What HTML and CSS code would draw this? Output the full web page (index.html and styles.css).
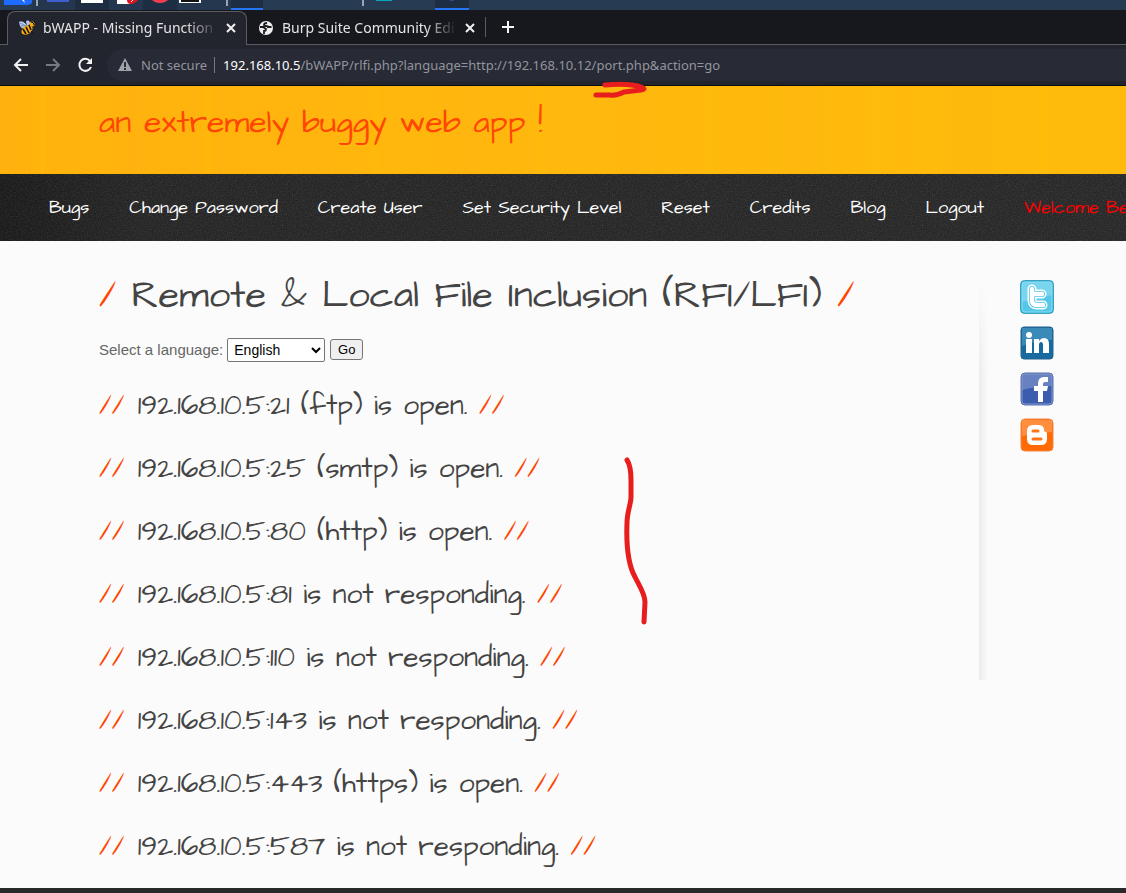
FILE: index.html
```html
<!DOCTYPE html>
<html lang="en">
<head>
<meta charset="utf-8">
<title>bWAPP - Missing Functional Level Access Control</title>
<link rel="stylesheet" href="styles.css">
</head>
<body>
<div class="taskbar">
  <svg width="480" height="10" viewBox="0 0 480 10">
    <rect x="33" width="198" height="10" fill="#24374f"/>
    <path d="M75 0h34v10H75zM143 0h34v10h-34z" fill="#1d2d42"/>
    <path d="M4 0h28v3q-2 2-5 2H4z" fill="#1d6bff"/>
    <path d="M22 0l3 3-1-3z" fill="#fff"/>
    <path d="M36 0h2v6h-2zM226 0h2v6h-2zM362 0h2v6h-2z" fill="#9aa5b2"/>
    <path d="M47 0h22v2H47z" fill="#3f5fd0"/>
    <path d="M81 0h22v3H81zM117 0h15l-1 4h-14z" fill="#fff"/>
    <path d="M127 0q0 4 4 4t7-4z" fill="#d9141e"/><path d="M131 2l2-2" stroke="#fff"/>
    <path d="M152 0q3 3 8 3t8-3z" fill="#f03c50"/>
    <path d="M179 0h22v3h-22z" fill="#fff"/><path d="M181 0h18v2h-18z" fill="#101214"/>
    <path d="M231 0h32v8h-32zM435 0h34v8h-34z" fill="#1d2d42"/>
    <path d="M231 8h32v2h-32zM435 8h34v2h-34z" fill="#2675f5"/>
    <path d="M376 0h16v1h-16z" fill="#08a9bd"/><path d="M449 0h5l-2 1z" fill="#3b5ca8"/>
  </svg>
</div>

<div class="tabs">
  <div class="tab tab-active">
    <svg class="favicon" width="16" height="16" viewBox="0 0 16 16">
      <path d="M0 2Q3 0 7 4L8 7Q3 10 1 6zM7 1q4-2 4 3L8 6z" fill="#b7cdf3"/>
      <path d="M1 3l6 3M2 6h5" stroke="#7188b2" stroke-width="1"/>
      <ellipse cx="8" cy="10" rx="6" ry="4" transform="rotate(-32 8 10)" fill="#f6ac11"/>
      <path d="M4 9l3 5M7 7l3 6M10 5l2 5" stroke="#15130c" stroke-width="1.6"/>
      <circle cx="13" cy="4" r="2.5" fill="#f6ac11"/><path d="M12 2q3 0 3 3M12 11l2 3" stroke="#15130c" fill="none"/>
    </svg>
    <span class="tab-name">bWAPP - Missing Function</span>
    <button class="icon-button" aria-label="Close tab"><svg width="10" height="10" viewBox="0 0 10 10"><path d="M1 1l8 8M9 1L1 9" stroke="#f0f0f2" stroke-width="2"/></svg></button>
  </div>
  <div class="tab tab-second">
    <svg class="favicon" width="16" height="16" viewBox="0 0 16 16">
      <circle cx="8" cy="8" r="7" fill="#eeeeef"/>
      <path d="M9 3Q6 3 6 5q0 1 2 1t2 1h3.500M2 7h3l3 2q0 2-2 2v3" fill="none" stroke="#1a1b20" stroke-width="1.8"/>
    </svg>
    <span class="tab-name">Burp Suite Community Edi</span>
    <button class="icon-button" aria-label="Close tab"><svg width="10" height="10" viewBox="0 0 10 10"><path d="M1 1l8 8M9 1L1 9" stroke="#f0f0f2" stroke-width="2"/></svg></button>
  </div>
  <button class="icon-button new-tab" aria-label="New tab"><svg width="12" height="12" viewBox="0 0 12 12"><path d="M6 0v12M0 6h12" stroke="#f4f4f6" stroke-width="2"/></svg></button>
</div>

<div class="toolbar">
  <button class="icon-button" aria-label="Back"><svg width="16" height="16" viewBox="0 0 16 16"><path d="M15 8H2M8 2L2 8l6 6" fill="none" stroke="#f2f2f4" stroke-width="2"/></svg></button>
  <button class="icon-button" aria-label="Forward"><svg width="16" height="16" viewBox="0 0 16 16"><path d="M1 8h13M8 2l6 6-6 6" fill="none" stroke="#777980" stroke-width="2"/></svg></button>
  <button class="icon-button" aria-label="Reload"><svg width="16" height="16" viewBox="0 0 16 16"><path d="M13 4a6 6 0 1 0 1 6" fill="none" stroke="#f2f2f4" stroke-width="2"/><path d="M15 1v6H9z" fill="#f2f2f4"/></svg></button>
  <div class="address">
    <svg width="16" height="16" viewBox="0 0 16 16"><path d="M8 1l7 13H1z" fill="#a0a3a9"/><path d="M7 5h2v5H7zM7 11h2v2H7z" fill="#282a35"/></svg>
    <span class="secure">Not secure</span>
    <span class="url"><b>192.168.10.5</b>/bWAPP/rlfi.php?language=http://192.168.10.12/port.php&amp;action=go</span>
  </div>
</div>

<header class="banner"><p class="tagline">an extremely buggy web app !</p></header>

<nav class="menu">
  <svg class="grain" width="100%" height="100%" aria-hidden="true"><filter id="grain"><feTurbulence type="fractalNoise" baseFrequency="0.8" numOctaves="2"/><feColorMatrix values="0 0 0 0 1  0 0 0 0 1  0 0 0 0 1  0.2 0 0 0 -0.08"/></filter><rect width="100%" height="100%" filter="url(#grain)"/></svg>
  <a href="#">Bugs</a>
  <a href="#">Change Password</a>
  <a href="#">Create User</a>
  <a href="#">Set Security Level</a>
  <a href="#">Reset</a>
  <a href="#">Credits</a>
  <a href="#">Blog</a>
  <a href="#">Logout</a>
  <span class="welcome">Welcome Bee</span>
</nav>

<div class="page">
  <main class="content">
    <h1 class="title"><i>/</i> Remote &amp; Local File Inclusion (RFI/LFI) <i>/</i></h1>
    <form class="language">
      <label for="language">Select a language:</label>
      <select id="language"><option>English</option></select>
      <button type="button">Go</button>
    </form>
    <h2 class="port"><i>//</i> 192.168.10.5:21 (ftp) is open. <i>//</i></h2>
    <h2 class="port"><i>//</i> 192.168.10.5:25 (smtp) is open. <i>//</i></h2>
    <h2 class="port"><i>//</i> 192.168.10.5:80 (http) is open. <i>//</i></h2>
    <h2 class="port"><i>//</i> 192.168.10.5:81 is not responding. <i>//</i></h2>
    <h2 class="port"><i>//</i> 192.168.10.5:110 is not responding. <i>//</i></h2>
    <h2 class="port"><i>//</i> 192.168.10.5:143 is not responding. <i>//</i></h2>
    <h2 class="port"><i>//</i> 192.168.10.5:443 (https) is open. <i>//</i></h2>
    <h2 class="port"><i>//</i> 192.168.10.5:587 is not responding. <i>//</i></h2>
  </main>
  <aside class="social">
    <a href="#" aria-label="Twitter"><svg width="34" height="34" viewBox="0 0 34 34">
      <rect x=".5" y=".5" width="33" height="33" rx="4" fill="#35b5dd" stroke="#3d9fbf"/><rect x="2" y="2" width="30" height="30" rx="3" fill="#55c7e8" stroke="#8adcf0"/><path d="M2 2h30v13Q18 18 2 22z" fill="#8edcf0" opacity=".65"/>
      <path d="M12 9v11q0 5 5 5h6M12 14h10" fill="none" stroke="#fff" stroke-width="9" stroke-linecap="round" stroke-linejoin="round"/><path d="M12 9v11q0 5 5 5h6M12 14h10" fill="none" stroke="#50c4e6" stroke-width="6" stroke-linecap="round"/><path d="M12 9v11q0 5 5 5h6M12 14h10" fill="none" stroke="#fff" stroke-width="4.500" stroke-linecap="round"/></svg></a>
    <a href="#" aria-label="LinkedIn"><svg width="34" height="34" viewBox="0 0 34 34">
      <rect x="1" y="1" width="32" height="32" rx="3" fill="#176a9f" stroke="#24628b"/><path d="M2 2h30v12Q17 14 2 20z" fill="#4c9bc4" opacity=".65"/>
      <circle cx="9" cy="9" r="3" fill="#fff"/><path d="M6 13h6v14H6zM14 13h5v2q2-3 5-3 5 0 5 6v9h-6v-8q0-3-2-3t-2 3v8h-5z" fill="#fff"/></svg></a>
    <a href="#" aria-label="Facebook"><svg width="34" height="34" viewBox="0 0 34 34">
      <rect x="1" y="1" width="32" height="32" rx="4" fill="#3c5cae" stroke="#5870ad"/><rect x="2" y="2" width="30" height="30" rx="3" fill="none" stroke="#8297cf"/><path d="M2 2h30v12Q17 14 2 18z" fill="#8599cb" opacity=".6"/>
      <path d="M18 30V19h-4v-5h4v-2q0-7 6-7h4v5h-3q-2 0-2 2v2h5l-1 5h-4v11z" fill="#fff"/></svg></a>
    <a href="#" aria-label="Blogger"><svg width="34" height="34" viewBox="0 0 34 34">
      <rect x="1" y="1" width="32" height="32" rx="4" fill="#ff6a05" stroke="#f18542"/><path d="M2 2h30v12Q17 15 2 18z" fill="#ff994e" opacity=".8"/>
      <path d="M7 13q0-6 6-6h5q6 0 6 5 0 2 2 2 1 0 1 2v5q0 6-6 6h-8q-6 0-6-6z" fill="#fff"/><path d="M13 13h5M13 21h8" stroke="#ff7416" stroke-width="3" stroke-linecap="round"/></svg></a>
  </aside>
</div>
<footer class="footer"></footer>

<svg class="ink" width="700" height="640" viewBox="0 0 700 640" aria-hidden="true">
  <path d="M605 85Q630 83 641 87Q647 89 641 90L624 92Q616 96 610 95H596" />
  <path d="M627 460Q631 466 631 480V497C631 504 627 512 627 523C626 548 629 566 635 577C640 587 645 594 645 602L644 622"/>
</svg>
</body>
</html>
```
FILE: styles.css
```css
* { box-sizing: border-box; }
body {
  margin: 0;
  min-height: 100vh;
  display: flex;
  flex-direction: column;
  position: relative;
  overflow: hidden;
  background: #fbfbfb;
  font-family: "Liberation Sans", Arial, sans-serif;
}
i { font-style: normal; color: #ff4500; }
a { text-decoration: none; }
svg { display: block; flex: none; }
.icon-button {
  display: flex;
  padding: 0;
  border: 0;
  background: none;
}

.taskbar { height: 10px; background: #273b53; overflow: hidden; }
.tabs {
  display: flex;
  height: 35px;
  padding-left: 7px;
  background: #17181d;
  border-bottom: 1px solid #5b5c62;
  font: 14px "Noto Sans", sans-serif;
  color: #e4e4e7;
}
.tab { display: flex; align-items: center; height: 35px; gap: 8px; }
.tab-active {
  width: 240px;
  padding: 0 10px 2px 11px;
  margin-top: 1px;
  height: 34px;
  background: #23252e;
  border: 1px solid #5b5c62;
  border-bottom: 0;
  border-radius: 8px 8px 0 0;
}
.tab-second { width: 238px; padding: 0 10px 0 11px; }
.tab-name {
  flex: 1;
  overflow: hidden;
  white-space: nowrap;
  -webkit-mask-image: linear-gradient(to right, #000 82%, transparent 100%);
  mask-image: linear-gradient(to right, #000 82%, transparent 100%);
}
.new-tab {
  align-self: center;
  padding: 4px 16px;
  border-left: 1px solid #5b5c62;
}
.toolbar {
  display: flex;
  align-items: center;
  gap: 16px;
  height: 41px;
  padding: 0 0 0 13px;
  background: #23252e;
  border-bottom: 1px solid #0b0c10;
}
.address {
  flex: 1;
  display: flex;
  align-items: center;
  height: 32px;
  padding-left: 10px;
  margin-left: -2px;
  border-radius: 16px 0 0 16px;
  background: #282a35;
  color: #92959d;
  font: 13px "Noto Sans", sans-serif;
  white-space: nowrap;
}
.secure { margin-left: 8px; padding-right: 7px; border-right: 1px solid #777980; line-height: 16px; }
.url { margin-left: 8px; }
.url b { font-weight: 400; color: #fff; }

.banner, .menu, .title, .port { font-family: "Architects Daughter", Lato, sans-serif; font-weight: 400; }
.banner {
  height: 88px;
  padding: 13px 99px;
  background:
    repeating-linear-gradient(90deg, #ffc00000 0 31px, #ffc60033 43px, #ffc00000 47px 109px, #ffac1822 131px, #ffc00000 167px),
    linear-gradient(90deg, #ffb20d, #ffb90d 60%, #ffbb0b);
}
.tagline { margin: 0; font-size: 32px; line-height: 48px; color: #ff4500; white-space: nowrap; }
.menu {
  position: relative;
  display: flex;
  align-items: center;
  gap: 40px;
  height: 67px;
  padding-left: 49px;
  background: linear-gradient(90deg, #1b1b1b, #262626 12%, #292929);
  font-size: 18px;
  line-height: 28px;
  white-space: nowrap;
  overflow: hidden;
}
.menu a { position: relative; color: #fff; }
.welcome { position: relative; color: #f00; }
.grain { position: absolute; inset: 0; }

.page {
  flex: 1;
  display: grid;
  grid-template-columns: minmax(0, 1fr) 147px;
  padding-left: 99px;
}
.title { margin: 25px 0 0; font-size: 38px; line-height: 60px; color: #444; white-space: nowrap; }
.language {
  display: flex;
  align-items: center;
  margin: 11px 0 12px;
  height: 25px;
  font-size: 15px;
  color: #666;
}
.language select {
  width: 98px;
  height: 24px;
  margin: 0 5px 0 4px;
  padding: 0 2px;
  border: 1px solid #767676;
  border-radius: 2px;
  background: #fff;
  font: 14px "Liberation Sans", Arial, sans-serif;
}
.language button {
  width: 33px;
  height: 21px;
  padding: 0;
  border: 1px solid #767676;
  border-radius: 3px;
  background: #efefef;
  font: 13px "Liberation Sans", Arial, sans-serif;
}
.port { margin: 0; font-size: 28px; line-height: 63px; color: #444; white-space: nowrap; }
.port i:first-child { margin-right: 2px; }
.social {
  display: flex;
  flex-direction: column;
  gap: 12px;
  height: 400px;
  margin-top: 39px;
  padding-left: 41px;
  background:
    linear-gradient(#fbfbfb, #fbfbfb00 25%),
    linear-gradient(90deg, #ebebeb, #fbfbfb) 0 0 / 9px 100% no-repeat;
}
.footer { height: 5px; background: #292929; }
.ink { position: absolute; top: 0; left: 0; pointer-events: none; }
.ink path { fill: none; stroke: #e81d1d; stroke-width: 5; stroke-linecap: round; stroke-linejoin: round; }
```
